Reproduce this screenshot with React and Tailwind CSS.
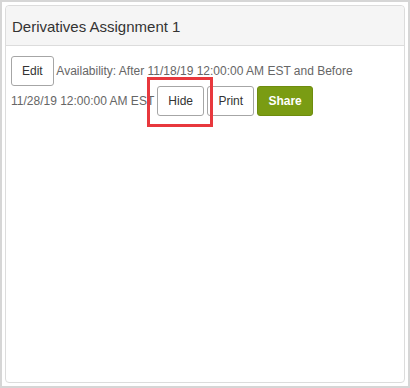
import React from 'react';

const btn =
  'inline-block align-baseline rounded-[3px] border border-[#a6a6a6] bg-white px-[10px] py-[6px] text-[12px] leading-4 text-[#333]';

export default function App() {
  return (
    <div className="relative h-[388px] w-[410px] border-2 border-[#d6d6d6] bg-white p-[3px] font-['Liberation_Sans',Arial,sans-serif]">
      <div className="flex h-full flex-col rounded-[4px] border border-[#dcdcdc]">
        {/* Header */}
        <div className="h-[40px] rounded-t-[4px] border-b border-[#dcdcdc] bg-[#f5f5f5] px-[6px] pt-[12px] text-[15px] leading-[18px] text-[#333]">
          Derivatives Assignment 1
        </div>

        {/* Body */}
        <div className="flex-1 px-[5px] pt-[10px] text-[12px] leading-4 text-[#666]">
          <button className={btn}>Edit</button> Availability: After 11/18/19 12:00:00 AM EST and Before 11/28/19 12:00:00 AM EST{' '}
          <button className={btn}>Hide</button>{' '}
          <button className={btn}>Print</button>{' '}
          <button className="inline-block align-baseline rounded-[3px] border border-[#6e8c0e] bg-[#7a9c13] px-[10px] py-[6px] text-[12px] font-bold leading-4 text-white">
            Share
          </button>
        </div>
      </div>

      {/* Highlight annotation */}
      <div className="pointer-events-none absolute left-[145px] top-[75px] h-[50px] w-[66px] border-[3px] border-[#e8383d]" />
    </div>
  );
}
